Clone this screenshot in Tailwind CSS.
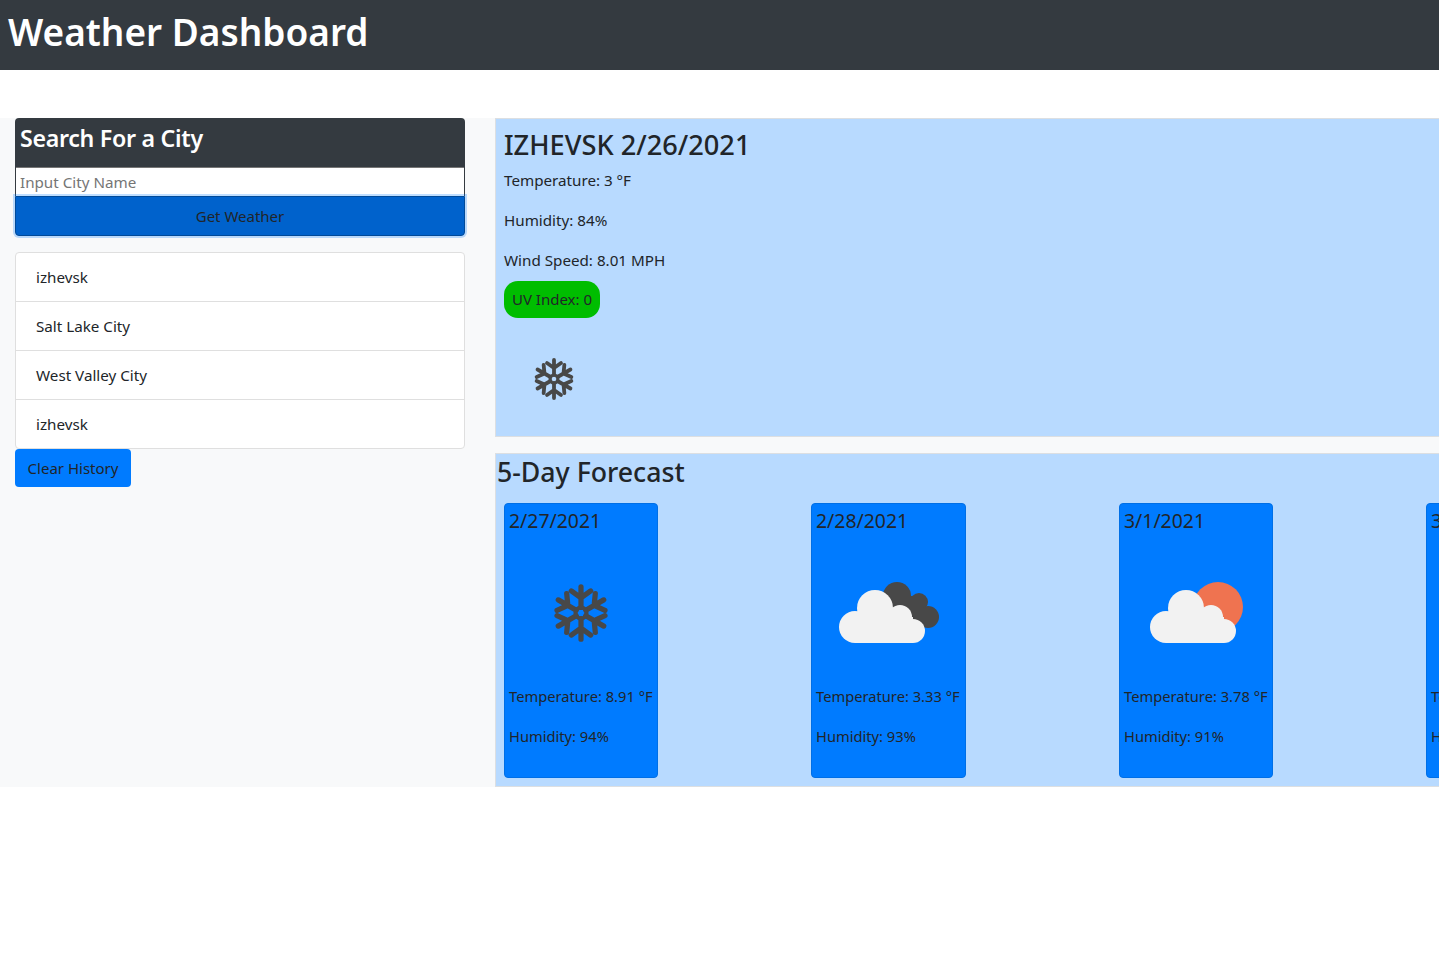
<!DOCTYPE html>
<html lang="en">
<head>
    <meta charset="UTF-8">
    <meta name="viewport" content="width=device-width, initial-scale=1.0">
    <title>Weather Dashboard</title>
    <script src="https://cdn.jsdelivr.net/npm/@tailwindcss/browser@4"></script>
</head>
<body class="bg-white overflow-hidden h-screen font-['Noto_Sans',sans-serif] text-[#212529] text-base">
    <!-- Header -->
    <header class="bg-[#343a40] h-[70px] pl-2 pt-[7px]">
        <h1 class="text-white text-[37px] leading-[50px] font-semibold">Weather Dashboard</h1>
    </header>

    <div class="flex mt-[48px] h-[669px] bg-[#f8f9fa] w-[1439px] overflow-hidden">
        <!-- Left side - search -->
        <aside class="w-[495px] shrink-0 pl-[15px] pr-[30px]">
            <div class="bg-[#343a40] rounded-t h-[49px] pl-[5px] pt-[4px]">
                <h2 class="text-white text-[23.2px] leading-[33px] font-semibold tracking-[-0.3px]">Search For a City</h2>
            </div>
            <div class="bg-[#343a40] px-px">
                <input type="text" placeholder="Input City Name" class="block w-full h-[29px] bg-white border-t border-[#767676] pl-1 text-[15.2px] text-[#212529] placeholder:text-[#757575] outline-none">
            </div>
            <button class="relative block w-full h-[40px] bg-[#0062cc] border border-[#004a99] rounded-b text-[15px] text-[#212529] shadow-[0_0_0_2px_rgba(0,123,255,0.25)]">Get Weather</button>

            <ul class="mt-[16px] bg-white border border-[#dfdfdf] rounded text-[15.2px]">
                <li class="h-[49px] px-5 flex items-center border-b border-[#dfdfdf]">izhevsk</li>
                <li class="h-[49px] px-5 flex items-center border-b border-[#dfdfdf]">Salt Lake City</li>
                <li class="h-[49px] px-5 flex items-center border-b border-[#dfdfdf]">West Valley City</li>
                <li class="h-[48px] px-5 flex items-center">izhevsk</li>
            </ul>
            <button class="block w-[116px] h-[38px] bg-[#007bff] rounded text-[15px] text-[#212529]">Clear History</button>
        </aside>

        <!-- Right side -->
        <main class="flex-1 min-w-0">
            <!-- Current weather -->
            <section class="h-[319px] bg-[#b8daff] border-y border-l border-[#dcdfe2] pl-2">
                <h2 class="text-[27.2px] leading-[34px] font-medium mt-[9px] mb-[6px]">IZHEVSK 2/26/2021</h2>
                <p class="text-[15.2px] leading-[24px] mb-4">Temperature: 3 °F</p>
                <p class="text-[15.2px] leading-[24px] mb-4">Humidity: 84%</p>
                <p class="text-[15.2px] leading-[24px] mb-[9px]">Wind Speed: 8.01 MPH</p>
                <span class="flex items-center justify-center w-[96px] h-[37px] rounded-[14px] bg-[#00bd00] text-[15px]">UV Index: 0</span>
                <svg class="ml-[29px] mt-[40px] w-[42px] h-[42px]" viewBox="-21 -21 42 42" fill="none" stroke="#484848" stroke-width="3.8" stroke-linecap="round" stroke-linejoin="round">
                    <path d="M0 -4V-19M-7 -16L0 -11L7 -16"/>
                    <path transform="rotate(60)" d="M0 -4V-19M-7 -16L0 -11L7 -16"/>
                    <path transform="rotate(120)" d="M0 -4V-19M-7 -16L0 -11L7 -16"/>
                    <path transform="rotate(180)" d="M0 -4V-19M-7 -16L0 -11L7 -16"/>
                    <path transform="rotate(240)" d="M0 -4V-19M-7 -16L0 -11L7 -16"/>
                    <path transform="rotate(300)" d="M0 -4V-19M-7 -16L0 -11L7 -16"/>
                    <circle r="4" stroke-width="3"/>
                </svg>
            </section>

            <!-- Forecast -->
            <section class="mt-[16px] h-[334px] bg-[#b8daff] border-y border-l border-[#dcdfe2] pl-px overflow-hidden">
                <h2 class="text-[26.7px] leading-[36px] font-medium">5-Day Forecast</h2>
                <div class="flex gap-[153px] ml-[7px] mt-[13px] w-[1400px]">
                    <div class="w-[154px] h-[275px] shrink-0 bg-[#007bff] border border-[#006fe6] rounded px-1 pt-1">
                        <h3 class="text-[19.4px] leading-[26px]">2/27/2021</h3>
                        <div class="h-[140px] flex items-center justify-center">
                            <svg class="w-[58px] h-[58px] mt-[18px]" viewBox="-21 -21 42 42" fill="none" stroke="#484848" stroke-width="3.8" stroke-linecap="round" stroke-linejoin="round">
                                <path d="M0 -4V-19M-7 -16L0 -11L7 -16"/>
                                <path transform="rotate(60)" d="M0 -4V-19M-7 -16L0 -11L7 -16"/>
                                <path transform="rotate(120)" d="M0 -4V-19M-7 -16L0 -11L7 -16"/>
                                <path transform="rotate(180)" d="M0 -4V-19M-7 -16L0 -11L7 -16"/>
                                <path transform="rotate(240)" d="M0 -4V-19M-7 -16L0 -11L7 -16"/>
                                <path transform="rotate(300)" d="M0 -4V-19M-7 -16L0 -11L7 -16"/>
                                <circle r="4" stroke-width="3"/>
                            </svg>
                        </div>
                        <p class="text-[14.7px] leading-[24px] mt-[10px] mb-4 whitespace-nowrap">Temperature: 8.91 °F</p>
                        <p class="text-[14.7px] leading-[24px] whitespace-nowrap">Humidity: 94%</p>
                    </div>
                    <div class="w-[155px] h-[275px] shrink-0 bg-[#007bff] border border-[#006fe6] rounded px-1 pt-1">
                        <h3 class="text-[19.4px] leading-[26px]">2/28/2021</h3>
                        <div class="h-[140px] flex items-center justify-center">
                            <svg class="w-[102px] h-[64px] mt-[18px]" viewBox="0 0 102 64">
                                <g fill="#484848">
                                    <circle cx="59" cy="15" r="14"/><circle cx="81" cy="21" r="9"/><circle cx="90" cy="36" r="11"/><path d="M55 15H85V40H55Z"/>
                                </g>
                                <g fill="#f2f2f2">
                                    <circle cx="37" cy="27" r="18"/><circle cx="62" cy="36" r="12"/><circle cx="17" cy="46" r="16"/><circle cx="75" cy="50" r="12"/><rect x="17" y="36" width="58" height="26"/>
                                </g>
                            </svg>
                        </div>
                        <p class="text-[14.7px] leading-[24px] mt-[10px] mb-4 whitespace-nowrap">Temperature: 3.33 °F</p>
                        <p class="text-[14.7px] leading-[24px] whitespace-nowrap">Humidity: 93%</p>
                    </div>
                    <div class="w-[154px] h-[275px] shrink-0 bg-[#007bff] border border-[#006fe6] rounded px-1 pt-1">
                        <h3 class="text-[19.4px] leading-[26px]">3/1/2021</h3>
                        <div class="h-[140px] flex items-center justify-center">
                            <svg class="w-[96px] h-[64px] mt-[18px]" viewBox="0 0 96 64">
                                <circle cx="70" cy="26" r="25" fill="#ef7350"/>
                                <g fill="#f2f2f2">
                                    <circle cx="38" cy="27" r="18"/><circle cx="63" cy="36" r="12"/><circle cx="18" cy="46" r="16"/><circle cx="76" cy="50" r="12"/><rect x="18" y="36" width="58" height="26"/>
                                </g>
                            </svg>
                        </div>
                        <p class="text-[14.7px] leading-[24px] mt-[10px] mb-4 whitespace-nowrap">Temperature: 3.78 °F</p>
                        <p class="text-[14.7px] leading-[24px] whitespace-nowrap">Humidity: 91%</p>
                    </div>
                    <div class="w-[154px] h-[275px] shrink-0 bg-[#007bff] border border-[#006fe6] rounded px-1 pt-1">
                        <h3 class="text-[19.4px] leading-[26px]">3/2/2021</h3>
                        <div class="h-[140px]"></div>
                        <p class="text-[14.7px] leading-[24px] mt-[10px] mb-4 whitespace-nowrap">Temperature: 3.1 °F</p>
                        <p class="text-[14.7px] leading-[24px] whitespace-nowrap">Humidity: 90%</p>
                    </div>
                </div>
            </section>
        </main>
    </div>
</body>
</html>
